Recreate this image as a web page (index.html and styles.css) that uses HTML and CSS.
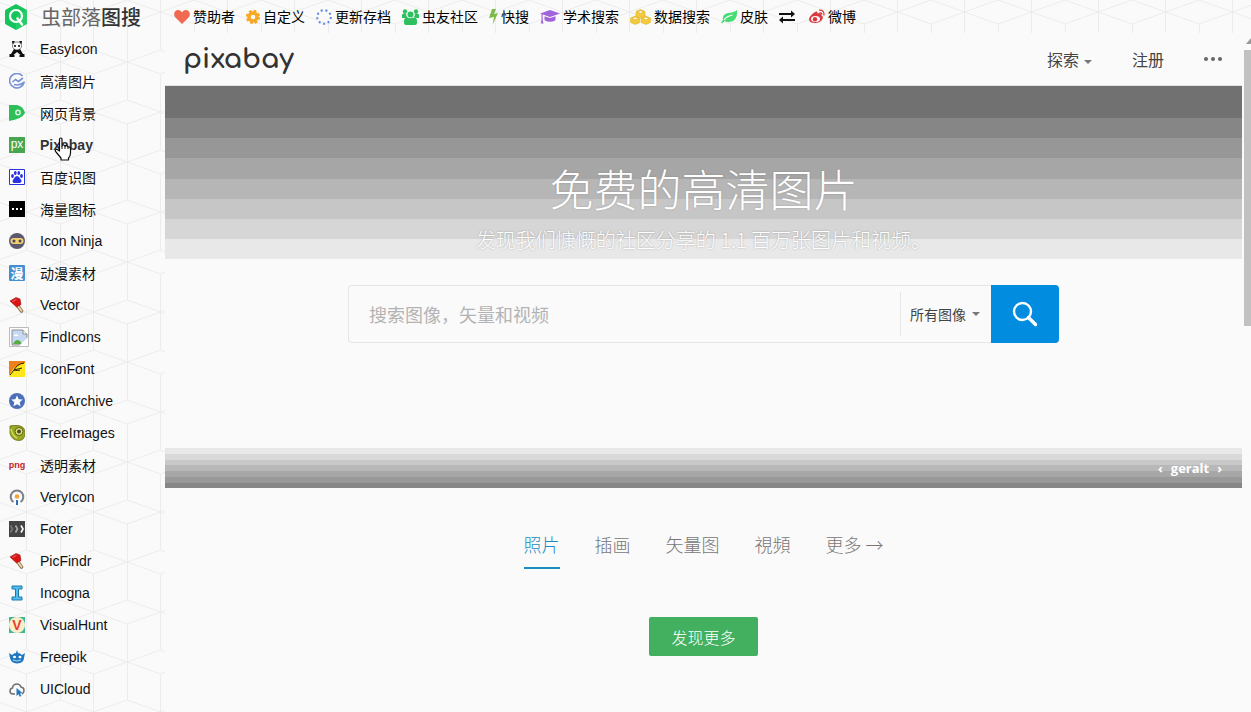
FILE: index.html
```html
<!DOCTYPE html>
<html lang="zh-CN">
<head>
  <meta charset="UTF-8" />
  <meta name="viewport" content="width=device-width, initial-scale=1.0" />
  <title>虫部落图搜</title>
  <link rel="stylesheet" href="styles.css">
</head>
<body>
  <svg class="sprite" aria-hidden="true">
    <symbol id="popsicle" viewBox="0 0 16 16">
      <path d="M9 9l3.500 5" stroke="#8d7350" stroke-width="3.600" stroke-linecap="round"/>
      <path d="M9 9l3.500 4.800" stroke="#ecd9a8" stroke-width="1.800" stroke-linecap="round"/>
      <path d="M1 4l6-3.500 4 1.500 1 5.500-4.500 2.500z" fill="#d81515" stroke="#a51010" stroke-width=".6"/>
      <path d="M3.500 4.500l4-2.200" stroke="#f66"/>
    </symbol>
  </svg>

  <header class="topbar">
    <a class="brand" href="#">
      <svg width="24" height="28" viewBox="0 0 24 28">
        <path d="M12 1l10 5.500q1 .5 1 1.500v12q0 1-1 1.500L12 27 2 21.500q-1-.5-1-1.500V8q0-1 1-1.500z" fill="#16c45c"/>
        <path d="M12 27V14l11-8v14q0 1-1 1.500z" fill="#33d874" opacity=".5"/>
        <circle cx="12" cy="13" r="6" fill="none" stroke="#fff" stroke-width="2.200"/>
        <path d="M13.500 15.500l4.500 6" stroke="#fff" stroke-width="2.400" stroke-linecap="round"/>
      </svg>
      <span>虫部落<b>图搜</b></span>
    </a>
    <nav class="links">
      <a href="#">
        <svg width="16" height="16" viewBox="0 0 16 16"><path d="M8 15L1.500 8.500C-1.500 5 1 1 4 1c2 0 3.200 1 4 2.500C8.800 2 10 1 12 1c3 0 5.500 4 2.500 7.500z" fill="#ef6a50"/></svg>赞助者</a>
      <a href="#">
        <svg width="14" height="16" viewBox="0 0 14 16"><circle cx="7" cy="8" r="4" fill="none" stroke="#f7a824" stroke-width="3.500"/><circle cx="7" cy="8" r="6" fill="none" stroke="#f7a824" stroke-width="2.400" stroke-dasharray="2.700 2"/></svg>自定义</a>
      <a href="#">
        <svg width="16" height="16" viewBox="0 0 16 16"><circle cx="8" cy="8" r="6.800" fill="none" stroke="#5b87dc" stroke-width="2" stroke-dasharray="2 2.750"/></svg>更新存档</a>
      <a href="#">
        <svg width="17" height="16" viewBox="0 0 17 16" fill="#2dc05f"><circle cx="3" cy="2.500" r="2.200"/><circle cx="14" cy="2.500" r="2.200"/><circle cx="8.500" cy="5.500" r="3"/><path d="M0 9V6q0-1.500 2-1.500h2Q4 8 6 9zM17 9V6q0-1.500-2-1.500h-2Q13 8 11 9zM2 14v-2q0-3.500 3-3.500 3.500 1.500 7 0 3 0 3 3.500v2q0 2-2 2H4q-2 0-2-2z"/></svg>虫友社区</a>
      <a href="#">
        <svg width="9" height="16" viewBox="0 0 9 16"><path d="M3 0h4L5 5l4-1-5.500 12L5 8 0 9z" fill="#7cba4c"/></svg>快搜</a>
      <a href="#">
        <svg width="20" height="16" viewBox="0 0 20 16" fill="#a163dc"><path d="M10 1l10 3.500L10 8 0 4.500z"/><path d="M4.500 7.200L10 9l5.500-1.800v4Q10 14.500 4.500 11.200z"/><path d="M1.500 5h1.200v6l.8 3.500H.7l.8-3.500z"/></svg>学术搜索</a>
      <a href="#">
        <svg width="21" height="16" viewBox="0 0 21 16" fill="#f3ca3c" stroke="#e0b32a" stroke-width=".6"><path d="M10.500.5l4.500 2v4.500l-4.500 2-4.500-2V2.500z"/><path d="M5.200 7l4.600 2v4.500l-4.600 2-4.600-2V9zM15.800 7l4.600 2v4.500l-4.600 2-4.600-2V9z"/><path d="M7.500 3l3 1.300 3-1.300-3-1.300zM2.200 9.500l3 1.300 3-1.300-3-1.300zM12.800 9.500l3 1.300 3-1.300-3-1.300z" fill="#fff"/></svg>数据搜索</a>
      <a href="#">
        <svg width="16" height="16" viewBox="0 0 16 16"><path d="M16 1q1 11-7.500 12-3 .5-5-1L1 14.500l-1-1L2 11Q1 5.500 7 4q6-.5 9-3z" fill="#47dc75"/><path d="M3 11q3-4 8.500-5" fill="none" stroke="#fff" stroke-width="1.200"/></svg>皮肤</a>
      <a class="swap" href="#" aria-label="切换">
        <svg width="16" height="16" viewBox="0 0 16 16" fill="#111"><path d="M0 4h12V1.500L16 5l-4 3.500V6H0zM16 10H4V7.500L0 11l4 3.500V12h12z"/></svg></a>
      <a href="#">
        <svg width="16" height="16" viewBox="0 0 16 16"><path d="M6 3q3-1.500 2.500 1.500 4-1.500 3.500 1.500 2.500 1 1.500 4-2 4-7.500 4T0 10.500Q0 7 6 3z" fill="#d93a3f"/><ellipse cx="6.500" cy="10" rx="4.500" ry="3" fill="#fff"/><circle cx="6" cy="10.300" r="2.200" fill="#d93a3f"/><path d="M10 1.200q5.500-.5 5 5.300M10.500 3.500q2.500-.2 2.300 2.300" fill="none" stroke="#d93a3f" stroke-width="1.200"/></svg>微博</a>
    </nav>
  </header>

  <div class="layout">
    <aside>
      <ul class="sites">
        <li><a href="#"><svg viewBox="0 0 16 16"><ellipse cx="8" cy="5" rx="4.500" ry="4" fill="#fff" stroke="#555" stroke-width=".7"/><path d="M3 0h3L3.500 3.500zM13 0h-3l2.500 3.500zM5 8q3 2 6 0l3 5h1.500v3h-5v-2h1L8 11l-3.500 3h1v2h-5v-3H2z" fill="#111"/><circle cx="6" cy="5" r="1"/><circle cx="10" cy="5" r="1"/></svg>EasyIcon</a></li>
        <li><a href="#"><svg viewBox="0 0 16 16" fill="none" stroke="#7590d4" stroke-width="1.600"><path d="M13.500 3A7.300 7.300 0 1 0 15.200 8.500"/><path d="M3.500 9l3-2.500 3 2L14 5M5 11.500q5 1.500 10-2"/></svg>高清图片</a></li>
        <li><a href="#"><svg viewBox="0 0 16 16"><path d="M0 0h8q6 1 8 8-3 6-16 8z" fill="#2dbf58"/><circle cx="9" cy="7.500" r="2.200" fill="#2dbf58" stroke="#d9f7e1" stroke-width="1.400"/></svg>网页背景</a></li>
        <li class="active"><a href="#"><svg viewBox="0 0 16 16"><path d="M0 0h16v16H0z" fill="#48a650"/><text class="px" x="8" y="11" text-anchor="middle">px</text></svg>Pixabay</a></li>
        <li><a href="#"><svg viewBox="0 0 16 16"><path d="M.5.5h15v15H.5z" fill="#fff" stroke="#2932e1"/><g fill="#2932e1"><ellipse cx="3.500" cy="7" rx="1.400" ry="1.900"/><ellipse cx="6.300" cy="4" rx="1.400" ry="1.900"/><ellipse cx="9.800" cy="4" rx="1.400" ry="1.900"/><ellipse cx="12.500" cy="7" rx="1.400" ry="1.900"/><path d="M8 7q2 0 3 2.500 2 1.500 1.500 3T10 14H6q-2.500 0-2.500-1.500T5 9.500Q6 7 8 7z"/></g></svg>百度识图</a></li>
        <li><a href="#"><svg viewBox="0 0 16 16"><path d="M0 0h16v16H0z"/><path d="M3 7h2v2H3zM7 7h2v2H7zM11 7h2v2h-2z" fill="#fff"/></svg>海量图标</a></li>
        <li><a href="#"><svg viewBox="0 0 16 16"><circle cx="8" cy="8" r="8" fill="#5b5870"/><rect x="1.500" y="5" width="13" height="6" rx="3" fill="#f1d06e"/><circle cx="5" cy="8" r="1.500" fill="#4a4659"/><circle cx="11" cy="8" r="1.500" fill="#4a4659"/></svg>Icon Ninja</a></li>
        <li><a href="#"><svg viewBox="0 0 16 16"><rect width="16" height="16" rx="1" fill="#448fd2"/><text class="man" x="8" y="13" text-anchor="middle">漫</text></svg>动漫素材</a></li>
        <li><a href="#"><svg><use href="#popsicle"/></svg>Vector</a></li>
        <li><a href="#"><svg class="broken" viewBox="0 0 20 20"><path d="M.5.500h19v19H.5z" fill="#fff" stroke="#bbb"/><path d="M3 3h11l4 4v11H3z" fill="#c5d9f4" stroke="#8d8d8d"/><path d="M14 3v4h4" fill="#fff" stroke="#8d8d8d"/><path d="M4 17q3-6 7-3l2 3z" fill="#55ad42"/><path d="M4.500 9q.5-2 2.500-1.500 2-1 2.500 1.500z" fill="#fff"/><path d="M19 10v9h-9z" fill="#fff"/></svg>FindIcons</a></li>
        <li><a href="#"><svg viewBox="0 0 16 16"><path d="M0 0h16v16H0z" fill="#ffe51c"/><path d="M0 0h16v2Q6 3 0 14z" fill="#f0801a"/><path d="M15 2Q8 3 5 9l-4 5M5 9l8-2M5 9q4 1 6 0" fill="none" stroke="#27200c"/></svg>IconFont</a></li>
        <li><a href="#"><svg viewBox="0 0 16 16"><circle cx="8" cy="8" r="8" fill="#4c70b8"/><path d="M8 2.500l1.700 3.700 4 .4-3 2.700.9 4L8 11.200l-3.600 2.100.9-4-3-2.700 4-.4z" fill="#fff"/></svg>IconArchive</a></li>
        <li><a href="#"><svg viewBox="0 0 16 16"><path d="M1 1q4-1 8-.5 7 1 7 7 0 8-6 8-7 0-9-7z" fill="#9aa724" stroke="#677015" stroke-width=".8"/><circle cx="10" cy="6.500" r="4" fill="#dde27b" stroke="#5c6311"/><circle cx="10" cy="6.500" r="2" fill="#4b4b24"/><path d="M2 4q1 6 6 9" fill="none" stroke="#d3dc57" stroke-width="1.500"/></svg>FreeImages</a></li>
        <li><a href="#"><svg viewBox="0 0 16 16"><text class="png" x="8" y="11" text-anchor="middle">png</text></svg>透明素材</a></li>
        <li><a href="#"><svg viewBox="0 0 16 16"><path d="M4.500 13A6.300 6.300 0 1 1 11.500 13" fill="none" stroke="#7b7f86" stroke-width="2"/><circle cx="8" cy="7.500" r="2.300" fill="#f2a33a"/><path d="M8 11v5" stroke="#2f6fb4" stroke-width="2"/></svg>VeryIcon</a></li>
        <li><a href="#"><svg viewBox="0 0 16 16"><path d="M0 0h16v16H0z" fill="#444"/><g fill="none" stroke-width="1.600"><path d="M1.500 4.500l2 3.500-2 3.500" stroke="#777"/><path d="M6.500 4.500l2 3.500-2 3.500" stroke="#aaa"/><path d="M12 4.500L14 8l-2 3.500" stroke="#fff"/></g></svg>Foter</a></li>
        <li><a href="#"><svg><use href="#popsicle"/></svg>PicFindr</a></li>
        <li><a href="#"><svg viewBox="0 0 16 16"><path d="M3 1h10v3H9.500v8H13v3H3v-3h3.500V4H3z" fill="#55bce9" stroke="#1878b0"/></svg>Incogna</a></li>
        <li><a href="#"><svg viewBox="0 0 16 16"><path d="M0 0h16v16H0z" fill="#3fb890"/><circle cx="8" cy="8" r="8" fill="#fbeecb"/><text class="vee" x="8" y="13" text-anchor="middle">V</text></svg>VisualHunt</a></li>
        <li><a href="#"><svg viewBox="0 0 16 16"><path d="M0 4l3 2q2-2 4-2l1-3 1 3q2 0 4 2l3-2-1 5q0 5-7 5.500Q2 14 1 9z" fill="#1f78bf"/><ellipse cx="5.500" cy="8" rx="1.500" ry="1.300" fill="#fff"/><ellipse cx="11" cy="8" rx="1.500" ry="1.300" fill="#fff"/><path d="M4 11q4 2 8 0" stroke="#a5d4f1" fill="none"/></svg>Freepik</a></li>
        <li><a href="#"><svg viewBox="0 0 16 16"><path d="M6 13H4q-3 0-3-3 0-2.500 2.500-3Q4 3 8 3q3 0 4 3 3 .5 3 3.500 0 2.500-2 3.500" fill="none" stroke="#707070" stroke-width="1.500"/><path d="M7.500 7l6 5-2.500.4 1.500 2.600-1.700.8-1.300-2.600-2 1.800z" fill="#2378bd"/></svg>UICloud</a></li>
      </ul>
      <!-- hand pointer over the active site -->
      <svg class="pointer" width="18" height="24" viewBox="0 0 18 24"><path d="M5.500 14V2.500q0-1.500 1.300-1.500T8 2.500V9q.5-1.200 1.700-1t1.300 1.500q.5-1 1.600-.8T14 10q2.500-.5 2.500 2v4q0 3-2 5v2H7v-2L2 15q-1.500-2 0-2.500T4 13z" fill="#fff" stroke="#111" stroke-width="1.200" stroke-linejoin="round"/><path d="M8 9v3M11 9.500V12M14 10v2" stroke="#111"/></svg>
    </aside>

    <main>
      <div class="page">
        <header class="site-header">
          <a class="logo" href="#">pixabay</a>
          <nav>
            <a href="#">探索<i class="caret"></i></a>
            <a href="#">注册</a>
            <a class="dots" href="#" aria-label="更多选项"><i></i><i></i><i></i></a>
          </nav>
        </header>

        <section class="hero">
          <h1>免费的高清图片</h1>
          <p>发现我们慷慨的社区分享的 1.1 百万张图片和视频。</p>
          <form class="search">
            <input type="text" placeholder="搜索图像，矢量和视频" aria-label="搜索图像，矢量和视频">
            <div class="type">
              <select aria-label="图像类型"><option>所有图像</option></select>
              <i class="caret"></i>
            </div>
            <button type="button" aria-label="搜索">
              <svg width="26" height="26" viewBox="0 0 26 26" fill="none" stroke="#fff"><circle cx="10.500" cy="10.500" r="8.500" stroke-width="2.400"/><path d="M16.500 16.500l7 7" stroke-width="3.400" stroke-linecap="round"/></svg>
            </button>
          </form>
          <div class="credit"><a href="#">‹</a><a href="#">geralt</a><a href="#">›</a></div>
        </section>

        <nav class="tabs">
          <a class="active" href="#">照片</a>
          <a href="#">插画</a>
          <a href="#">矢量图</a>
          <a href="#">視頻</a>
          <a href="#">更多 →</a>
        </nav>
        <button class="more" type="button">发现更多</button>
      </div>
      <div class="scrollbar"><i class="up"></i><div class="thumb"></div></div>
    </main>
  </div>
</body>
</html>
```
FILE: styles.css
```css
:root {
  --bg: #fafafa;
  --blue: #028ce0;
  --green: #42b05f;
  --side: 165px;
}
* {
  box-sizing: border-box;
}
body {
  margin: 0;
  min-height: 100vh;
  display: flex;
  flex-direction: column;
  font: 14px "Liberation Sans", "Noto Sans CJK SC", sans-serif;
  color: #111;
  /* cube outline tile */
  background: var(--bg) url("data:image/svg+xml,%3Csvg xmlns='http://www.w3.org/2000/svg' width='67' height='100'%3E%3Cpath d='M17 0L84 24M17 24L84 0M17 0L-16.500 12L17 24M50.500 50L17 62L50.500 74L84 62zM17 62L-16.500 50M17 62L-16.500 74M17.500 24V100M50.500 74V100M50.500 0V50' fill='none' stroke='%23ececec'/%3E%3C/svg%3E") -24px 0;
}
a {
  color: inherit;
  text-decoration: none;
}
button, input, select {
  font: inherit;
  border: 0;
  outline: none;
}
.sprite {
  display: none;
}

/* top bar */
.topbar {
  display: flex;
  height: 33px;
  align-items: center;
}
.brand {
  width: var(--side);
  padding-left: 4px;
  display: flex;
  align-items: center;
  gap: 13px;
  font-family: "Noto Sans CJK SC", sans-serif;
  font-size: 20px;
  line-height: 32px;
  font-weight: 400;
  color: #666;
  white-space: nowrap;
}
.brand b {
  font-weight: 500;
  color: #333;
}
.links {
  display: flex;
  gap: 11px;
  padding-left: 9px;
  line-height: 32px;
  white-space: nowrap;
  color: #000;
}
.links a {
  display: flex;
  align-items: center;
  gap: 3px;
}
.links .swap {
  padding-right: 3px;
}

.layout {
  flex: 1;
  display: flex;
}

/* site list */
aside {
  width: var(--side);
  flex-shrink: 0;
  position: relative;
}
.sites {
  list-style: none;
  margin: 0;
  padding: 0;
}
.sites a {
  display: flex;
  align-items: center;
  height: 32px;
  padding-left: 9px;
}
.sites svg {
  width: 16px;
  height: 16px;
  margin-right: 15px;
}
.sites svg.broken {
  width: 20px;
  height: 20px;
  margin-right: 11px;
}
.sites .active {
  font-weight: bold;
  color: #333;
}
.sites text {
  font-weight: bold;
}
.sites .px {
  font-size: 12px;
  font-weight: normal;
  fill: #fff;
}
.man {
  font-size: 13px;
  fill: #fff;
}
.png {
  font-size: 9px;
  fill: #c42222;
}
.vee {
  font-size: 14px;
  fill: #e8402a;
}
.pointer {
  position: absolute;
  left: 54px;
  top: 104px;
}

/* embedded page */
main {
  flex: 1;
  display: flex;
  min-width: 0;
  background: var(--bg);
}
.page {
  flex: 1;
  min-width: 0;
  font-family: "Noto Sans CJK SC", sans-serif;
}
.site-header {
  height: 53px;
  border-bottom: 1px solid #e3e3e3;
  padding: 0 20px 0 18px;
  display: flex;
  align-items: center;
  justify-content: space-between;
}
.logo {
  font: bold 27px/44px Comfortaa, Lato, sans-serif;
  color: #333;
}
.site-header nav {
  display: flex;
  align-items: center;
  gap: 40px;
  font-size: 16px;
  line-height: 24px;
  color: #444;
}
.caret {
  display: inline-block;
  border: 4px solid transparent;
  border-top-color: #777;
  border-bottom: 0;
  vertical-align: middle;
}
.site-header .caret {
  margin-left: 5px;
}
.dots {
  display: flex;
  gap: 3px;
}
.dots i {
  width: 4px;
  height: 4px;
  border-radius: 50%;
  background: #666;
}
.hero {
  min-height: 402px;
  padding-top: 72px;
  display: flex;
  flex-direction: column;
  align-items: center;
  color: #fff;
  background: linear-gradient(
    #717171 32px, #868686 32px 52px, #979797 52px 72px, #a6a6a6 72px 93px,
    #b6b6b6 93px 113px, #c6c6c6 113px 133px, #d6d6d6 133px 153px,
    #e8e8e8 153px 173px, var(--bg) 173px);
}
.hero h1 {
  margin: 0 0 8px;
  font-size: 44px;
  line-height: 60px;
  font-weight: 300;
  text-shadow: 0 0 2px rgba(0,0,0,0.2);
}
.hero p {
  margin: 0 0 31px;
  font-size: 20px;
  line-height: 28px;
  font-weight: 300;
  text-shadow: 0 0 2px rgba(0,0,0,0.3);
}
.search {
  width: 66%;
  height: 58px;
  display: flex;
  border: 1px solid #e6e6e6;
  border-right: 0;
  border-radius: 4px;
}
.search input {
  flex: 1;
  min-width: 0;
  padding: 0 20px;
  font-size: 18px;
  background: none;
}
.search input::placeholder {
  color: #b3b3b3;
}
.type {
  display: flex;
  align-items: center;
  margin: 6px 0;
  padding: 0 11px 0 9px;
  gap: 6px;
  border-left: 1px solid #e6e6e6;
}
.type select {
  appearance: none;
  background: none;
  padding: 0;
  color: #444;
}
.search button {
  width: 68px;
  margin: -1px 0;
  padding: 0;
  background: var(--blue);
  border-radius: 0 4px 4px 0;
}
.search svg {
  vertical-align: middle;
}
.credit {
  align-self: stretch;
  margin-top: auto;
  height: 40px;
  padding-right: 20px;
  display: flex;
  align-items: center;
  justify-content: flex-end;
  gap: 8px;
  font: bold 13px "Open Sans", sans-serif;
  background: linear-gradient(
    #e8e8e8 6px, #d9d9d9 6px 12px, #c8c8c8 12px 17px, #b8b8b8 17px 23px,
    #a7a7a7 23px 29px, #989898 29px 35px, #868686 35px);
}
.tabs {
  display: flex;
  justify-content: center;
  gap: 35px;
  margin-top: 33px;
  font-size: 18px;
  line-height: 46px;
  font-weight: 300;
  color: #777;
}
.tabs a {
  border-bottom: 2px solid transparent;
}
.tabs .active {
  color: #1b8dc0;
  border-color: #1b8dc0;
}
.more {
  display: block;
  margin: 48px auto 0;
  padding: 0 22px;
  height: 39px;
  font-size: 16px;
  font-weight: 300;
  color: #fff;
  background: var(--green);
  border-radius: 2px;
}
.scrollbar {
  width: 9px;
  padding: 5px 0 0 2px;
  overflow: hidden;
  display: flex;
  flex-direction: column;
}
.up {
  width: 0;
  border: 5px solid transparent;
  border-top: 0;
  border-bottom: 6px solid #999;
  margin: 0 0 6px 2px;
}
.thumb {
  height: 41%;
  background: #c1c1c1;
}
```
